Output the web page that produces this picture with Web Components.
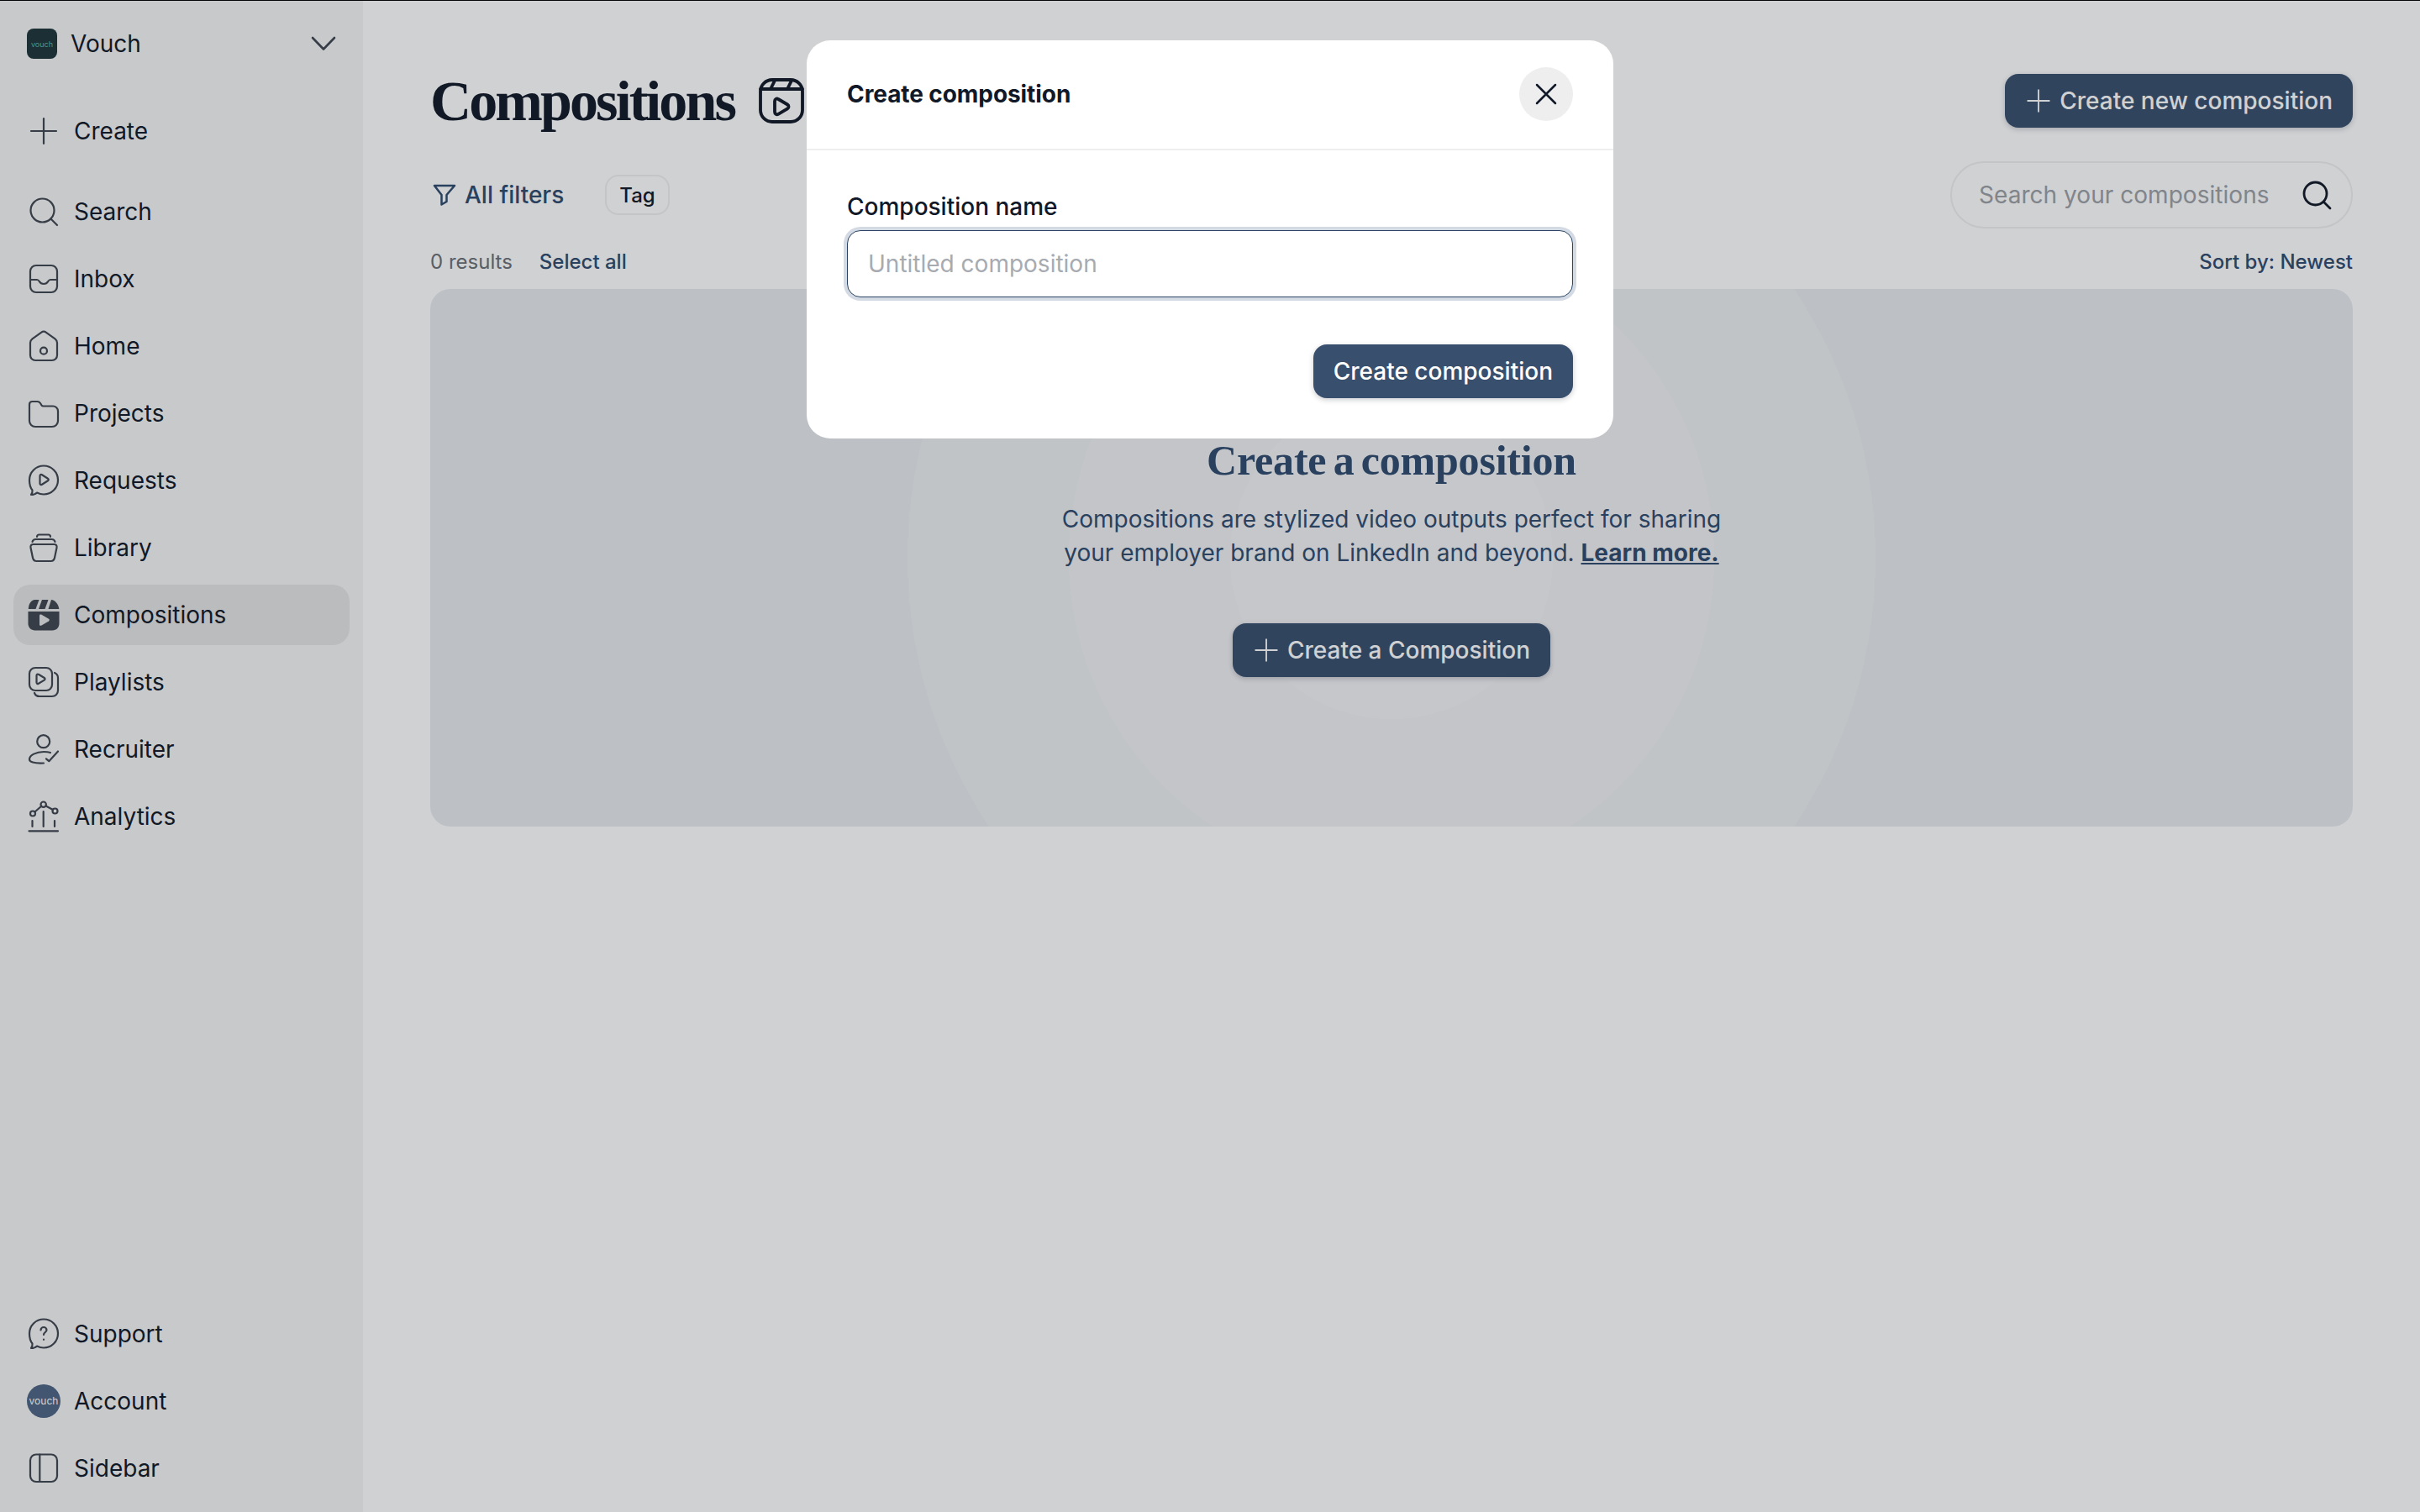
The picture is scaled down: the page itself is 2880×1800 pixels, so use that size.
<!DOCTYPE html>
<html lang="en"><head><meta charset="utf-8"><title>Compositions</title>
<style>
html,body{margin:0;padding:0;height:100%;background:#fff;overflow:hidden}
body{font-family:Inter,"Liberation Sans",sans-serif;color:#111827}
</style></head>
<body>
<v-app>
  <v-sidebar slot="sidebar"></v-sidebar>
  <v-main slot="main"></v-main>
</v-app>
<v-modal></v-modal>
<script>
const S='fill="none" stroke="currentColor" stroke-width="2.2" stroke-linecap="round" stroke-linejoin="round"';
const BUBBLE='M20 2.5C29.4 2.5 37 10 37 19.5S29.400 36.500 20 36.500c-3 0-5.500-.7-8-2-1.500 1.500-4 2.500-7 2.500.8-1 1.800-3 1.500-5.500C4 28.500 3 24 3 19.500 3 10 10.600 2.500 20 2.500z';
const ICONS={
 plus:`<path ${S} d="M20 5v30M5 20h30"/>`,
 search:`<g ${S}><circle cx="18.500" cy="18.500" r="14"/><path d="M29 29l7 7"/></g>`,
 inbox:`<g ${S}><rect x="4" y="4" width="32" height="32" rx="7"/><path d="M4 21h8c1.500 0 2 .7 2.800 2 .8 1.500 2.700 3 5.200 3s4.400-1.500 5.200-3c.8-1.300 1.300-2 2.800-2h8"/></g>`,
 home:`<g ${S}><path d="M4 16c0-2 1-3.500 2.500-4.700L17 3.800c1.800-1.300 4.200-1.300 6 0l10.500 7.500c1.500 1.200 2.500 2.700 2.500 4.700v15c0 3.300-2.700 6-6 6H10c-3.300 0-6-2.700-6-6z"/><circle cx="20" cy="25.700" r="4"/></g>`,
 folder:`<path ${S} d="M3 12V9.500C3 7.500 4.500 6 6.500 6h6c1.500 0 2.500.5 3.500 2l1.500 2.500c.5.8 1 1 2 1H31c3.300 0 6 2.700 6 6V29c0 3.900-3.100 7-7 7H10c-3.900 0-7-3.100-7-7z"/>`,
 requests:`<g ${S}><path d="${BUBBLE}"/><path d="M15.500 14.500c0-1.300 1.400-2 2.500-1.300l7 4.500c1 .6 1 2 0 2.600l-7 4.500c-1.100.7-2.500 0-2.500-1.300z"/></g>`,
 library:`<g ${S}><path d="M12 7c0-1.500 1-2.500 2.500-2.500h11c1.500 0 2.500 1 2.500 2.500"/><path d="M6.500 13c.5-2 2-3 4-3h19c2 0 3.500 1 4 3"/><path d="M4.500 20c-.5-2.500 1-4 3-4h25c2 0 3.500 1.500 3 4l-2.500 12c-.5 2.500-2 4-4.500 4H11.500c-2.500 0-4-1.500-4.500-4z"/></g>`,
 compositions:`<g fill="currentColor"><path d="M1.500 16h37v14.500c0 4.400-3.600 8-8 8h-21c-4.400 0-8-3.600-8-8z"/><path d="M9 2h5.500l-4 11H1.800C2 7.500 4.500 3 9 2z"/><path d="M18 2h7.500l-4 11H14z"/><path d="M29 2c4.500.5 8.500 5 9.300 11H25.500z"/></g><path fill="#E5E5E5" d="M15 21c0-1.500 1-2 2.500-1.200l8.500 5c1 .7 1 2 0 2.600l-8.500 5c-1.500.8-2.500.2-2.500-1.200z"/>`,
 playlists:`<g ${S}><rect x="3" y="3" width="27" height="27" rx="7"/><path d="M33 9c2.500 1 4 3 4 6v15c0 4-3 7-7 7H15c-3 0-5-1.500-6-4"/><path d="M11.500 12c0-1.200 1.300-1.900 2.300-1.200l7 4.200c1 .6 1 2 0 2.600l-7 4.200c-1 .7-2.300 0-2.300-1.200z"/></g>`,
 recruiter:`<g ${S}><circle cx="19.700" cy="10.700" r="7.500"/><path d="M28 24c-2-.7-5-1-8-1-9 0-17 4-17 9 0 3 5 5 17 4.500"/><path d="M23 31.300l3.300 2.900L37 22.500"/></g>`,
 analytics:`<g ${S}><path d="M2.500 37.300h34.500M6.500 25v7M19.700 14v18M33 25v7M9.500 14.500l7.700-6.800M22.700 7.500l8.300 4.500"/><circle cx="7" cy="16.500" r="3"/><circle cx="19.700" cy="5.700" r="3.200"/><circle cx="33.500" cy="13.500" r="3"/></g>`,
 support:`<g ${S}><path d="${BUBBLE}"/><path d="M16.500 15.500c0-2 1.600-3.500 3.500-3.500s3.500 1.500 3.500 3.300c0 2.700-3.500 2.700-3.500 5.700M20 26.500v.3"/></g>`,
 sidebar:`<g ${S}><rect x="4" y="3.500" width="32" height="32.500" rx="7"/><path d="M15.300 3.500V36"/></g>`
};
class VIcon extends HTMLElement{
  connectedCallback(){
    const n=this.getAttribute('name'),sz=this.getAttribute('size')||40;
    this.attachShadow({mode:'open'}).innerHTML=`<style>:host{display:inline-flex;flex:none;width:${sz}px;height:${sz}px;color:inherit}svg{display:block;width:100%;height:100%;overflow:visible}</style><svg viewBox="0 0 40 40" aria-hidden="true">${ICONS[n]||''}</svg>`;
  }
}
customElements.define('v-icon',VIcon);

class VApp extends HTMLElement{
  constructor(){super();this.attachShadow({mode:'open'}).innerHTML=`<style>
  :host{display:grid;grid-template-columns:432px 1fr;height:1800px;box-sizing:border-box;border-top:1px solid #000}
  </style><slot name="sidebar"></slot><slot name="main"></slot>`;}
}
customElements.define('v-app',VApp);

class VNavItem extends HTMLElement{
  connectedCallback(){
    const icon=this.getAttribute('icon'),label=this.getAttribute('label'),active=this.hasAttribute('active');
    this.attachShadow({mode:'open'}).innerHTML=`<style>
    :host{display:flex;align-items:center;gap:16px;height:72px;margin:0 16px;padding:0 16px;border-radius:20px;font-size:28px;line-height:40px;color:#111827;background:${active?'#E5E5E5':'transparent'}}
    .i{display:flex;color:#3F4650}
    </style><span class="i"><slot name="icon">${icon?`<v-icon name="${icon}"></v-icon>`:''}</slot></span><span>${label}</span>`;
  }
}
customElements.define('v-nav-item',VNavItem);

class VSidebar extends HTMLElement{
  connectedCallback(){
    this.attachShadow({mode:'open'}).innerHTML=`<style>
    :host{display:flex;flex-direction:column;background:#F6F6F6;height:1799px;padding-top:15px;box-sizing:border-box;padding-bottom:16px}
    .org{display:flex;align-items:center;height:72px;padding:0 32px;font-size:28px;color:#111827;gap:16px}
    .logo{width:36px;height:36px;border-radius:8px;background:#1E353A;color:#58B5AC;font-size:9px;display:flex;align-items:center;justify-content:center;flex:none}
    .org span.n{flex:1}
    .chev{display:block;color:#3F4650}
    .create{margin:32px 0 24px}
    nav{display:flex;flex-direction:column;gap:8px}
    .bottom{margin-top:auto}
    </style>
    <div class="org"><span class="logo">vouch</span><span class="n">Vouch</span>
      <svg class="chev" width="30" height="18" viewBox="0 0 30 18" fill="none" stroke="currentColor" stroke-width="2.600" stroke-linecap="round" stroke-linejoin="round"><path d="M2 2l13 13.500L28 2"/></svg></div>
    <nav class="create"><v-nav-item icon="plus" label="Create"></v-nav-item></nav>
    <nav>
      <v-nav-item icon="search" label="Search"></v-nav-item>
      <v-nav-item icon="inbox" label="Inbox"></v-nav-item>
      <v-nav-item icon="home" label="Home"></v-nav-item>
      <v-nav-item icon="folder" label="Projects"></v-nav-item>
      <v-nav-item icon="requests" label="Requests"></v-nav-item>
      <v-nav-item icon="library" label="Library"></v-nav-item>
      <v-nav-item icon="compositions" label="Compositions" active></v-nav-item>
      <v-nav-item icon="playlists" label="Playlists"></v-nav-item>
      <v-nav-item icon="recruiter" label="Recruiter"></v-nav-item>
      <v-nav-item icon="analytics" label="Analytics"></v-nav-item>
    </nav>
    <nav class="bottom">
      <v-nav-item icon="support" label="Support"></v-nav-item>
      <v-nav-item label="Account"><span slot="icon" style="width:40px;height:40px;border-radius:50%;background:#4E6585;color:#fff;font-size:12px;display:flex;align-items:center;justify-content:center">vouch</span></v-nav-item>
      <v-nav-item icon="sidebar" label="Sidebar"></v-nav-item>
    </nav>`;
  }
}
customElements.define('v-sidebar',VSidebar);

class VButton extends HTMLElement{
  connectedCallback(){
    const plus=this.hasAttribute('plus');
    this.attachShadow({mode:'open'}).innerHTML=`<style>
    :host{display:inline-flex;align-items:center;height:64px;box-sizing:border-box;padding:0 24px 0 ${plus?23:24}px;border-radius:16px;background:#384F6D;color:#fff;font-size:28px;font-weight:500;white-space:nowrap;box-shadow:0 2px 6px rgba(17,24,39,.22);gap:${plus?8:0}px}
    </style>${plus?'<v-icon name="plus" size="34"></v-icon>':''}<slot></slot>`;
  }
}
customElements.define('v-button',VButton);

class VMain extends HTMLElement{
  connectedCallback(){
    this.attachShadow({mode:'open'}).innerHTML=`<style>
    :host{display:flex;flex-direction:column;padding:87px 80px 0;box-sizing:border-box;height:1799px;background:#fff;min-width:0}
    .head{display:flex;align-items:center;justify-content:space-between;height:64px}
    h1{margin:0;display:flex;align-items:center;gap:29px;font:700 68px/64px "Liberation Serif",serif;letter-spacing:-2.900px;color:#111827}
    .title-ic{display:block;color:#111827}
    .filters{display:flex;align-items:center;justify-content:space-between;height:80px;margin-top:40px}
    .fl{display:flex;align-items:center}
    .all{display:flex;align-items:center;gap:10px;font-size:28px;font-weight:500;color:#2F4C6E;margin-left:3px}
    .tag{display:flex;align-items:center;height:48px;box-sizing:border-box;padding:0 15px;margin-left:49px;border:2px solid #F0F0F1;border-radius:16px;font-size:24px;font-weight:500;color:#111827}
    .search{display:flex;align-items:center;justify-content:space-between;box-sizing:border-box;width:479px;height:80px;border:2px solid #F0F0F1;border-radius:40px;padding:0 23px 0 32px;font-size:28px;color:#9CA0A6}
    .search span{letter-spacing:.04px}
    .search svg{display:block;color:#111827}
    .meta{display:flex;align-items:center;justify-content:space-between;height:46px;margin:16px 0 10px;font-size:24px;font-weight:500;color:#2F4C6E}
    .meta .l{display:flex;gap:32px}
    .res{color:#6B7075;font-weight:400}
    </style>
    <div class="head">
      <h1>Compositions
        <svg class="title-ic" width="54" height="54" viewBox="0 0 54 54" fill="none" stroke="currentColor" stroke-width="3.800" stroke-linecap="round" stroke-linejoin="round"><rect x="2" y="2" width="50" height="50" rx="14"/><path d="M2 13h50M19 3l-5 10M39 3l-5 10"/><path d="M19 27.500c0-2.300 2.300-3.700 4.200-2.500l11 6.500c1.800 1.100 1.800 3.700 0 4.800l-11 6.500c-1.900 1.200-4.200-.2-4.200-2.500z"/></svg>
      </h1>
      <v-button plus>Create new composition</v-button>
    </div>
    <div class="filters">
      <div class="fl">
        <span class="all"><svg width="28" height="26" viewBox="0 0 28 26" fill="none" stroke="currentColor" stroke-width="2.500" stroke-linejoin="round" stroke-linecap="round"><path d="M2 2h24L16.500 13v8l-6 3.500V13z"/></svg>All filters</span>
        <span class="tag">Tag</span>
      </div>
      <div class="search"><span>Search your compositions</span>
        <svg width="36" height="36" viewBox="0 0 36 36" fill="none" stroke="currentColor" stroke-width="2.800" stroke-linecap="round"><circle cx="16.500" cy="16.500" r="13.500"/><path d="M26.500 26.500l7.500 7.500"/></svg></div>
    </div>
    <div class="meta"><span class="l"><span class="res">0 results</span><span>Select all</span></span><span>Sort by: Newest</span></div>
    <v-empty></v-empty>`;
  }
}
customElements.define('v-main',VMain);

class VEmpty extends HTMLElement{
  connectedCallback(){
    this.attachShadow({mode:'open'}).innerHTML=`<style>
    :host{display:flex;flex-direction:column;align-items:center;height:640px;box-sizing:border-box;padding-top:172px;border-radius:24px;
      background:radial-gradient(circle at 50% 50%,#F2F3F5 0 192px,#F0F1F3 192px 384px,#EDEFF1 384px 576px,#E8EBEF 576px)}
    h2{margin:0;font:700 50px/64px "Liberation Serif",serif;letter-spacing:-.2px;word-spacing:-4px;color:#2F4C6E}
    p{margin:18px 0 0;text-align:center;font-size:28px;line-height:40px;color:#2F4C6E}
    a{font-weight:700;color:inherit;text-decoration:underline}
    v-button{margin-top:64px}
    </style>
    <h2>Create a composition</h2>
    <p>Compositions are stylized video outputs perfect for sharing<br>your employer brand on LinkedIn and beyond. <a>Learn more.</a></p>
    <v-button plus>Create a Composition</v-button>`;
  }
}
customElements.define('v-empty',VEmpty);

class VModal extends HTMLElement{
  connectedCallback(){
    this.attachShadow({mode:'open'}).innerHTML=`<style>
    :host{position:fixed;inset:0;display:flex;justify-content:center;align-items:flex-start;padding-top:48px;box-sizing:border-box;background:rgba(20,25,35,.2)}
    .dlg{width:960px;height:474px;background:#fff;border-radius:28px;box-sizing:border-box;color:#111827}
    header{display:flex;align-items:center;justify-content:space-between;box-sizing:border-box;padding:0 48px 2px;border-bottom:2px solid #EEEEEE;height:131px}
    h3{margin:0;font-size:28px;font-weight:700;letter-spacing:-.08px}
    .x{width:64px;height:64px;border-radius:50%;background:#EEEEEE;display:flex;align-items:center;justify-content:center;color:#111827}
    .body{padding:51px 48px 0}
    label{display:block;font-size:28px;font-weight:500;line-height:32px}
    input{display:block;width:100%;height:80px;box-sizing:border-box;margin-top:12px;padding:0 25px 0 24px;border:1px solid #2A4563;border-radius:16px;box-shadow:0 0 0 4px #D4DAE3;font:400 28px Inter,sans-serif;outline:none;color:#111827}
    input::placeholder{color:#A7ABB1;opacity:1}
    .foot{display:flex;justify-content:flex-end;margin-top:56px}
    </style>
    <div class="dlg" role="dialog">
      <header><h3>Create composition</h3><span class="x"><svg width="28" height="28" viewBox="0 0 28 28" fill="none" stroke="currentColor" stroke-width="2.500" stroke-linecap="round"><path d="M3 3l22 22M25 3L3 25"/></svg></span></header>
      <div class="body">
        <label>Composition name</label>
        <input placeholder="Untitled composition">
        <div class="foot"><v-button>Create composition</v-button></div>
      </div>
    </div>`;
  }
}
customElements.define('v-modal',VModal);
</script>
</body></html>
